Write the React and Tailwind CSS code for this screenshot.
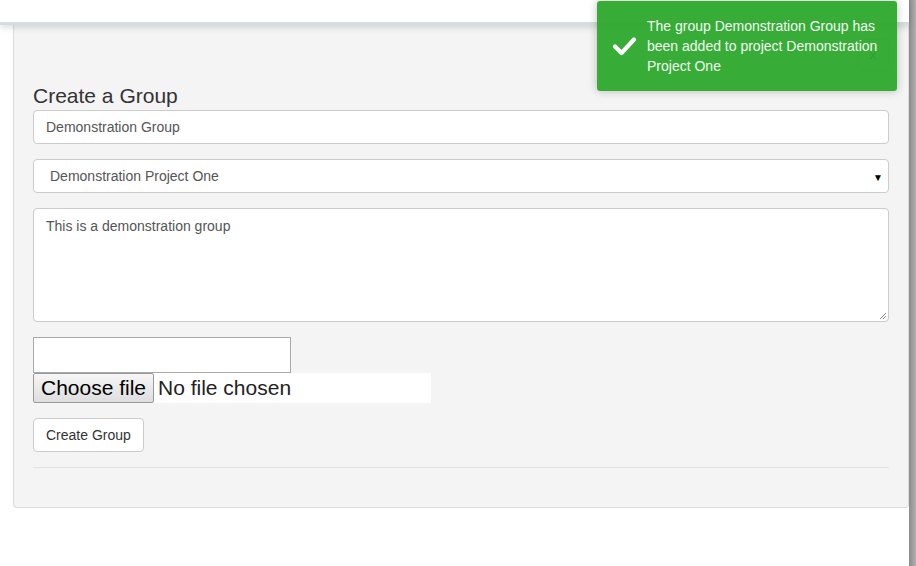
export default function App() {
  return (
    <div className="relative w-[916px] h-[566px] overflow-hidden bg-white flex font-['Liberation_Sans',Arial,sans-serif] text-[#333]">
      <div className="w-[909px] flex flex-col">
        {/* top bar */}
        <div className="h-[25px] bg-white border-b-[3px] border-[#d4dedf] shadow-[0_3px_6px_rgba(0,0,0,0.12)] relative z-10" />

        {/* panel */}
        <div className="ml-[13px] bg-[#f4f4f4] border border-t-0 border-[#dcdcdc] rounded-b px-[19px] pt-[14px] pb-[39px]">
          <div className="flex justify-end">
            <button className="w-[32px] h-[32px] border border-[#ccc] rounded bg-white text-[13px] text-[#333]">x</button>
          </div>
          <h3 className="text-[21px] leading-[23px] mt-[13px] mb-[3px]">Create a Group</h3>

          <input
            readOnly
            value="Demonstration Group"
            className="w-full h-[34px] px-[12px] bg-white border border-[#ccc] rounded text-[14px] text-[#555] outline-none"
          />

          <div className="relative mt-[15px] h-[34px] bg-white border border-[#ccc] rounded flex items-center pl-[16px] text-[14px] text-[#555]">
            Demonstration Project One
            <span className="absolute right-[5px] top-[10px] text-[10px] text-black">▼</span>
          </div>

          <div className="relative mt-[15px] h-[114px] bg-white border border-[#ccc] rounded px-[12px] py-[7px] text-[14px] leading-[20px] text-[#555]">
            This is a demonstration group
            <svg className="absolute right-[1px] bottom-[1px]" width="8" height="8" viewBox="0 0 8 8">
              <path d="M7 1 L1 7 M7 4 L4 7" stroke="#888" strokeWidth="1" />
            </svg>
          </div>

          <div className="mt-[15px] w-[258px] h-[36px] bg-white border border-[#a9a9a9]" />
          <div className="flex w-[398px] h-[30px] bg-white items-center">
            <div className="h-[30px] w-[121px] border border-[#999] rounded-[2px] bg-gradient-to-b from-[#f6f6f6] to-[#dedede] flex items-center justify-center text-[21px] text-black">
              Choose file
            </div>
            <span className="ml-[4px] text-[21px] text-[#222]">No file chosen</span>
          </div>

          <button className="mt-[15px] h-[34px] px-[12px] bg-white border border-[#ccc] rounded text-[14px] text-[#333]">
            Create Group
          </button>

          <div className="mt-[15px] border-t border-[#e3e3e3]" />
        </div>
      </div>

      {/* right edge strip */}
      <div className="w-[7px] h-full bg-gradient-to-r from-[#8c8c8c] to-[#b0b0b0]" />

      {/* toast */}
      <div className="absolute z-20 left-[597px] top-[1px] w-[300px] h-[90px] rounded-[3px] bg-[#2ca82c]/95 shadow-[0_0_8px_rgba(0,0,0,0.25)] flex items-center pl-[15px] pr-[15px]">
        <svg width="25" height="20" viewBox="0 0 25 20" className="shrink-0">
          <path d="M3 10.5 L9.5 17 L22 3.5" fill="none" stroke="white" strokeWidth="4.2" strokeLinecap="round" strokeLinejoin="round" />
        </svg>
        <p className="ml-[10px] text-[14px] leading-[20px] text-[#f3f9f3]">
          The group Demonstration Group has been added to project Demonstration Project One
        </p>
      </div>
    </div>
  )
}
